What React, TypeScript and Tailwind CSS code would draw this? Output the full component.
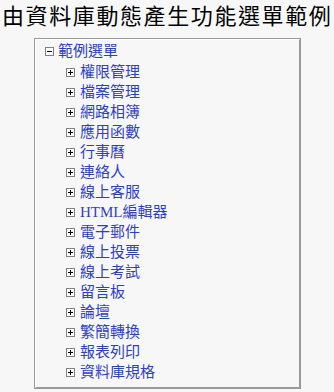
import React from 'react';

const items = [
  '權限管理', '檔案管理', '網路相簿', '應用函數', '行事曆', '連絡人', '線上客服', 'HTML編輯器',
  '電子郵件', '線上投票', '線上考試', '留言板', '論壇', '繁簡轉換', '報表列印', '資料庫規格',
];

const font = { fontFamily: '"Liberation Serif", "Noto Sans CJK TC", serif' };

function Toggle({ open }: { open: boolean }) {
  return (
    <span className="relative inline-block w-[9px] h-[9px] border border-[#808080] bg-white shrink-0">
      <span className="absolute left-[1px] top-[3px] w-[5px] h-px bg-black" />
      {!open && <span className="absolute left-[3px] top-[1px] w-px h-[5px] bg-black" />}
    </span>
  );
}

export default function App() {
  return (
    <div className="w-[334px] h-[392px] bg-[#f7f7f7] overflow-hidden" style={font}>
      <h1 className="pl-[2px] pt-[4px] h-[38px] text-[22px] leading-[26px] tracking-[1.6px] text-black whitespace-nowrap">
        由資料庫動態產生功能選單範例
      </h1>
      <div className="ml-[34px] w-[267px] h-[351px] border border-[#9a9a9a]">
        <div className="h-full border border-t-white border-l-white border-r-[#9a9a9a] border-b-[#9a9a9a] pt-[1px] text-[15px] text-[#2e3ec8]">
          <div className="h-[20px] flex items-center pl-[9px] gap-[4px]">
            <Toggle open />
            <span className="leading-[20px]">範例選單</span>
          </div>
          <ul className="mt-px">
            {items.map(label => (
              <li key={label} className="h-[20px] flex items-center pl-[30px] gap-[5px]">
                <Toggle open={false} />
                <span className="leading-[20px] whitespace-nowrap">{label}</span>
              </li>
            ))}
          </ul>
        </div>
      </div>
    </div>
  );
}
